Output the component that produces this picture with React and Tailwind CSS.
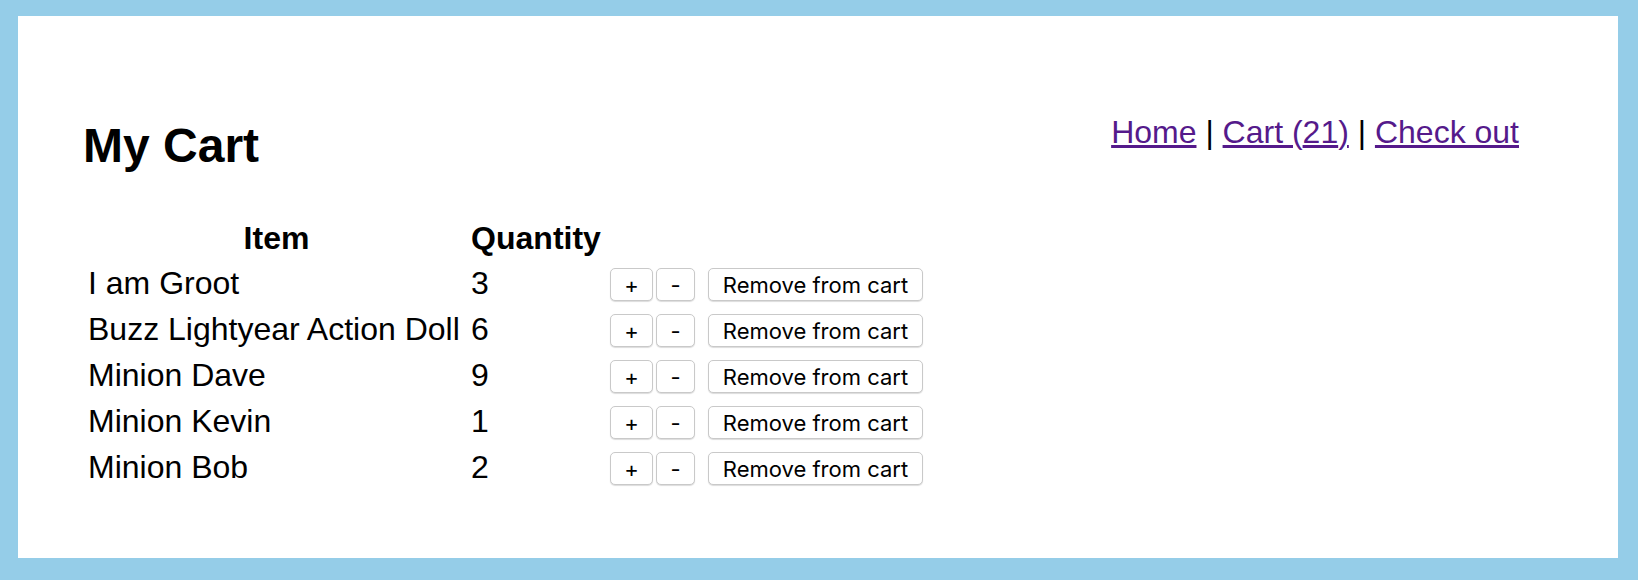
import { useState } from 'react'

const initialItems = [
  { id: 1, name: 'I am Groot', quantity: 3 },
  { id: 2, name: 'Buzz Lightyear Action Doll', quantity: 6 },
  { id: 3, name: 'Minion Dave', quantity: 9 },
  { id: 4, name: 'Minion Kevin', quantity: 1 },
  { id: 5, name: 'Minion Bob', quantity: 2 }
]

function CartButton({ children, className = '', onClick }) {
  return (
    <button
      onClick={onClick}
      className={`h-[33px] flex items-center justify-center pt-[1px] rounded-[5px] border border-[#c9c9c9] bg-white text-[22px] leading-none text-black font-['Inter',sans-serif] shadow-[0_1px_1px_rgba(0,0,0,0.14)] ${className}`}
    >
      {children}
    </button>
  )
}

export default function App() {
  const [items, setItems] = useState(initialItems)

  const total = items.reduce((sum, item) => sum + item.quantity, 0)

  const changeQuantity = (id, delta) => {
    setItems(items.map(item =>
      item.id === id ? { ...item, quantity: Math.max(0, item.quantity + delta) } : item
    ))
  }

  const removeItem = (id) => {
    setItems(items.filter(item => item.id !== id))
  }

  return (
    <div className="w-[1638px] h-[580px] bg-[#95cde8] pt-[16px] pl-[18px] font-['Liberation_Sans',Arial,sans-serif] text-black">
      <div className="w-[1600px] h-[542px] bg-white">
        {/* Header */}
        <div className="flex items-start justify-between pt-[98px] pl-[65px] pr-[99px]">
          <h2 className="mt-[4px] text-[48px] leading-[55px] font-bold">My Cart</h2>
          <nav className="text-[32px] leading-[37px]">
            <a href="#" className="text-[#551a8b] underline">Home</a>
            {' | '}
            <a href="#" className="text-[#551a8b] underline">Cart ({total})</a>
            {' | '}
            <a href="#" className="text-[#551a8b] underline">Check out</a>
          </nav>
        </div>

        {/* Cart table */}
        <div className="mt-[44px] pl-[70px] text-[32px]">
          <div className="flex h-[43px] leading-[43px] font-bold">
            <div className="w-[377px] text-center">Item</div>
            <div className="w-[130px] ml-[6px] text-center">Quantity</div>
          </div>
          {items.map(item => (
            <div key={item.id} className="flex items-start h-[46px] leading-[46px]">
              <div className="w-[377px] whitespace-nowrap">{item.name}</div>
              <div className="w-[130px] ml-[6px]">{item.quantity}</div>
              <div className="flex pl-[9px] mt-[8px]">
                <CartButton className="w-[43px]" onClick={() => changeQuantity(item.id, 1)}>+</CartButton>
                <CartButton className="w-[39px] ml-[3px]" onClick={() => changeQuantity(item.id, -1)}>-</CartButton>
                <CartButton className="w-[215px] ml-[13px]" onClick={() => removeItem(item.id)}>Remove from cart</CartButton>
              </div>
            </div>
          ))}
        </div>
      </div>
    </div>
  )
}
